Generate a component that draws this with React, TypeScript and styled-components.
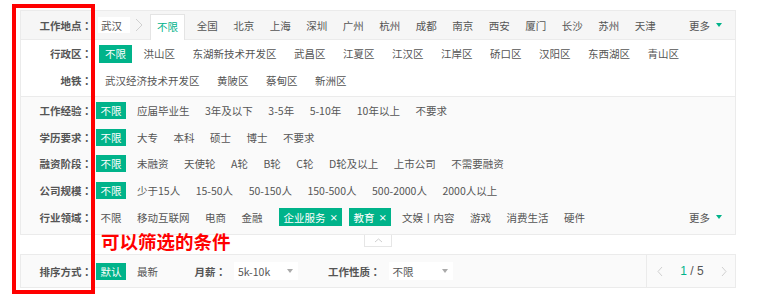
import React from 'react';
import styled, { createGlobalStyle } from 'styled-components';

const GREEN = '#00b38a';
const LINE = '#ebebeb';

const Global = createGlobalStyle`
  html, body { margin: 0; padding: 0; background: #fff; }
  body {
    font-family: "Noto Sans CJK SC", "Noto Sans", sans-serif;
    font-size: 10.5px;
    color: #555;
  }
  * { box-sizing: border-box; }
`;

const Page = styled.div`
  position: relative;
  width: 760px;
  height: 300px;
  padding: 10px 0 0 20px;
`;

const Panel = styled.div`
  width: 716px;
  border: 1px solid ${LINE};
  background: #fafafa;
`;

const CityRow = styled.div`
  display: flex;
  align-items: center;
  height: 29px;
  border-bottom: 1px solid ${LINE};
  background: #f6f6f6;
`;

const SubArea = styled.div`
  background: #fff;
  border-bottom: 1px solid ${LINE};
  padding-bottom: 2px;
`;

const RowsBlock = styled.div`
  padding-bottom: 3.25px;
`;

const Row = styled.div<{ $h: number }>`
  display: flex;
  align-items: center;
  height: ${p => p.$h}px;
`;

const LabelBox = styled.div`
  flex-shrink: 0;
  width: 71px;
  text-align: right;
  font-weight: 700;
  color: #555;
  white-space: nowrap;
`;

const ColonMark = styled.span`
  font-family: "Noto Sans CJK JP", "Noto Sans CJK SC", sans-serif;
`;

const Label = ({ text }: { text: string }) => (
  <LabelBox>
    {text}
    <ColonMark>：</ColonMark>
  </LabelBox>
);

const Options = styled.div<{ $gap: number; $offset: number }>`
  display: flex;
  align-items: center;
  gap: ${p => p.$gap}px;
  margin-left: ${p => p.$offset}px;
`;

const Item = styled.span<{ $active?: boolean; $pad?: number; $tall?: boolean }>`
  display: inline-flex;
  align-items: center;
  height: ${p => (p.$tall ? 18 : 17)}px;
  padding: 0 ${p => p.$pad ?? 4.5}px;
  white-space: nowrap;
  color: ${p => (p.$active ? '#fff' : '#555')};
  background: ${p => (p.$active ? GREEN : 'transparent')};
  cursor: pointer;
`;

const Chip = styled(Item)`
  height: 18px;
  padding: 0 4px 0 5px;
`;

const Close = styled.span`
  margin-left: 4px;
  font-size: 8.5px;
  font-weight: 700;
`;

const CurrentCity = styled.span`
  display: inline-flex;
  align-items: center;
  height: 16px;
  width: 32px;
  margin-left: 6px;
  padding-left: 3px;
  background: #fff;
  color: #555;
`;

const Crumb = styled.span`
  margin-left: 5px;
  flex-shrink: 0;
`;

const CityTab = styled.span`
  position: relative;
  z-index: 1;
  align-self: stretch;
  display: flex;
  align-items: center;
  margin: 3px 0 -1px 7px;
  padding: 0 6px 2px;
  background: #fff;
  border: 1px solid #e4e4e4;
  border-bottom: none;
  color: ${GREEN};
`;

const More = styled.span`
  margin-left: auto;
  padding-right: 13px;
  display: flex;
  align-items: center;
  gap: 6px;
  color: #555;
  cursor: pointer;
`;

const Caret = styled.span<{ $color: string }>`
  width: 0;
  height: 0;
  border-left: 3.5px solid transparent;
  border-right: 3.5px solid transparent;
  border-top: 4.5px solid ${p => p.$color};
`;

const FoldWrap = styled.div`
  width: 716px;
  display: flex;
  justify-content: center;
`;

const FoldTab = styled.div`
  width: 28px;
  height: 12px;
  background: #fff;
  border: 1px solid #e6e6e6;
  border-top: none;
  display: flex;
  align-items: center;
  justify-content: center;
`;

const SortPanel = styled.div`
  margin-top: 7px;
  width: 716px;
  height: 34px;
  border: 1px solid ${LINE};
  background: #fafafa;
  display: flex;
  align-items: center;
`;

const Group = styled.div<{ $offset: number }>`
  display: flex;
  align-items: center;
  margin-left: ${p => p.$offset}px;
`;

const GroupLabel = styled.span`
  font-weight: 700;
  color: #555;
  white-space: nowrap;
`;

const Select = styled.div`
  margin-left: 8px;
  width: 64px;
  height: 18px;
  background: #fff;
  padding: 0 5px 0 4px;
  display: flex;
  align-items: center;
  justify-content: space-between;
  color: #555;
`;

const Pager = styled.div`
  margin-left: auto;
  align-self: stretch;
  width: 89px;
  border-left: 1px solid ${LINE};
  display: flex;
  align-items: center;
  padding: 0 8px 0 10px;
  justify-content: space-between;
`;

const PageNum = styled.span`
  font-size: 12px;
  color: #555;
  font-family: "Liberation Sans", "Noto Sans", sans-serif;
  white-space: pre;
`;

const Current = styled.span`
  color: ${GREEN};
`;

const Highlight = styled.div`
  position: absolute;
  left: 12px;
  top: 4px;
  width: 83px;
  height: 290px;
  border: 4px solid #ff0000;
  pointer-events: none;
`;

const Note = styled.div`
  position: absolute;
  left: 101px;
  top: 230px;
  font-size: 18.5px;
  line-height: 22px;
  font-weight: 700;
  color: #ff0000;
  white-space: nowrap;
`;

const Chevron = ({ dir, w, h }: { dir: 'left' | 'right' | 'up'; w: number; h: number }) => {
  const pts =
    dir === 'right'
      ? `1,1 ${w - 1},${h / 2} 1,${h - 1}`
      : dir === 'left'
      ? `${w - 1},1 1,${h / 2} ${w - 1},${h - 1}`
      : `1,${h - 1} ${w / 2},1 ${w - 1},${h - 1}`;
  return (
    <svg width={w} height={h} viewBox={`0 0 ${w} ${h}`} style={{ display: 'block' }}>
      <polyline points={pts} fill="none" stroke="#d0d0d0" strokeWidth="1" />
    </svg>
  );
};

const cities = ['全国', '北京', '上海', '深圳', '广州', '杭州', '成都', '南京', '西安', '厦门', '长沙', '苏州', '天津'];
const districts = ['洪山区', '东湖新技术开发区', '武昌区', '江夏区', '江汉区', '江岸区', '硚口区', '汉阳区', '东西湖区', '青山区'];
const metro = ['武汉经济技术开发区', '黄陂区', '蔡甸区', '新洲区'];

const filters: { label: string; items: string[] }[] = [
  { label: '工作经验', items: ['应届毕业生', '3年及以下', '3-5年', '5-10年', '10年以上', '不要求'] },
  { label: '学历要求', items: ['大专', '本科', '硕士', '博士', '不要求'] },
  { label: '融资阶段', items: ['未融资', '天使轮', 'A轮', 'B轮', 'C轮', 'D轮及以上', '上市公司', '不需要融资'] },
  { label: '公司规模', items: ['少于15人', '15-50人', '50-150人', '150-500人', '500-2000人', '2000人以上'] },
];

const industries = ['移动互联网', '电商', '金融'];
const industriesAfter = ['文娱丨内容', '游戏', '消费生活', '硬件'];

export default function App() {
  return (
    <>
      <Global />
      <Page>
        <Panel>
          <CityRow>
            <Label text="工作地点" />
            <CurrentCity>武汉</CurrentCity>
            <Crumb>
              <Chevron dir="right" w={8} h={14} />
            </Crumb>
            <CityTab>不限</CityTab>
            <Options $gap={0} $offset={4}>
              {cities.map(c => (
                <Item key={c} $pad={7.75}>
                  {c}
                </Item>
              ))}
            </Options>
            <More>
              更多
              <Caret $color={GREEN} />
            </More>
          </CityRow>
          <SubArea>
            <Row $h={27}>
              <Label text="行政区" />
              <Options $gap={5.5} $offset={7}>
                <Item $active $pad={6} $tall>
                  不限
                </Item>
                {districts.map(d => (
                  <Item key={d} $pad={6}>
                    {d}
                  </Item>
                ))}
              </Options>
            </Row>
            <Row $h={27}>
              <Label text="地铁" />
              <Options $gap={5.5} $offset={7}>
                {metro.map(d => (
                  <Item key={d} $pad={6}>
                    {d}
                  </Item>
                ))}
              </Options>
            </Row>
          </SubArea>
          <RowsBlock>
            {filters.map(f => (
              <Row $h={26.75} key={f.label}>
                <Label text={f.label} />
                <Options $gap={6.5} $offset={4}>
                  <Item $active>不限</Item>
                  {f.items.map(it => (
                    <Item key={it}>{it}</Item>
                  ))}
                </Options>
              </Row>
            ))}
            <Row $h={26.75}>
              <Label text="行业领域" />
              <Options $gap={6.5} $offset={4}>
                <Item>不限</Item>
                {industries.map(it => (
                  <Item key={it}>{it}</Item>
                ))}
                <Chip $active style={{ marginLeft: 5 }}>
                  企业服务<Close>×</Close>
                </Chip>
                <Chip $active>
                  教育<Close>×</Close>
                </Chip>
                {industriesAfter.map(it => (
                  <Item key={it}>{it}</Item>
                ))}
              </Options>
              <More>
                更多
                <Caret $color={GREEN} />
              </More>
            </Row>
          </RowsBlock>
        </Panel>
        <FoldWrap>
          <FoldTab>
            <Chevron dir="up" w={9} h={5} />
          </FoldTab>
        </FoldWrap>
        <SortPanel>
          <Label text="排序方式" />
          <Options $gap={6.5} $offset={4}>
            <Item $active>默认</Item>
            <Item>最新</Item>
          </Options>
          <Group $offset={32}>
            <GroupLabel>
              月薪<ColonMark>：</ColonMark>
            </GroupLabel>
            <Select>
              5k-10k
              <Caret $color="#aaa" />
            </Select>
          </Group>
          <Group $offset={30}>
            <GroupLabel>
              工作性质<ColonMark>：</ColonMark>
            </GroupLabel>
            <Select>
              不限
              <Caret $color="#aaa" />
            </Select>
          </Group>
          <Pager>
            <Chevron dir="left" w={6} h={11} />
            <PageNum>
              <Current>1</Current> / 5
            </PageNum>
            <Chevron dir="right" w={6} h={11} />
          </Pager>
        </SortPanel>
        <Highlight />
        <Note>可以筛选的条件</Note>
      </Page>
    </>
  );
}
